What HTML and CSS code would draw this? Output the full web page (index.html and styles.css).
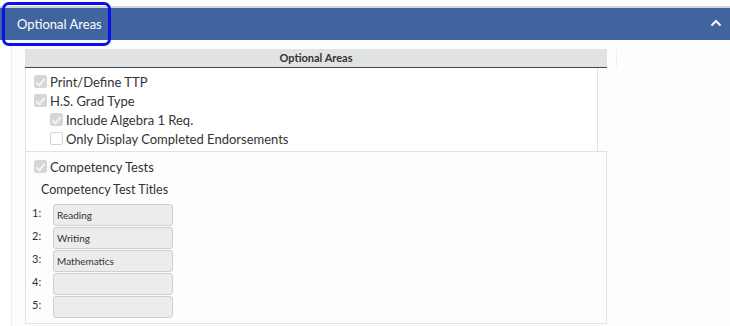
FILE: index.html
```html
<!DOCTYPE html>
<html lang="en">
<head>
    <meta charset="UTF-8">
    <title>Optional Areas</title>
    <link rel="stylesheet" href="styles.css">
</head>
<body>
    <div class="panel">
        <div class="panel-heading">
            <span class="panel-title">Optional Areas</span>
            <svg class="chevron" width="12" height="8" viewBox="0 0 12 8">
                <polyline points="1.5,6.5 6,2 10.5,6.5" fill="none" stroke="#fff" stroke-width="2"/>
            </svg>
        </div>
        <div class="panel-body">
            <div class="grid">
                <div class="grid-top">
                    <div class="grid-head">Optional Areas</div>
                    <div class="grid-gutter"></div>
                </div>
                <div class="section">
                    <label class="check"><span class="box checked"></span>Print/Define TTP</label>
                    <label class="check"><span class="box checked"></span>H.S. Grad Type</label>
                    <label class="check sub"><span class="box checked"></span>Include Algebra 1 Req.</label>
                    <label class="check sub"><span class="box"></span>Only Display Completed Endorsements</label>
                </div>
                <div class="section comp">
                    <label class="check"><span class="box checked"></span>Competency Tests</label>
                    <div class="titles-label">Competency Test Titles</div>
                    <div class="titles">
                        <div class="title-row"><span class="num">1:</span><span class="field">Reading</span></div>
                        <div class="title-row"><span class="num">2:</span><span class="field">Writing</span></div>
                        <div class="title-row"><span class="num">3:</span><span class="field">Mathematics</span></div>
                        <div class="title-row"><span class="num">4:</span><span class="field"></span></div>
                        <div class="title-row"><span class="num">5:</span><span class="field"></span></div>
                    </div>
                </div>
            </div>
        </div>
    </div>
</body>
</html>
```

FILE: styles.css
```css
body {
    margin: 0;
    font-family: Lato, "Open Sans", sans-serif;
    color: #333;
    background: #fff;
}

.panel {
    margin-top: 6px;
    border-top: 2px solid #d3d3d3;
}

.panel-heading {
    position: relative;
    display: flex;
    align-items: center;
    justify-content: space-between;
    height: 32px;
    background: #40649e;
    color: #fff;
    padding: 0 8px 0 17px;
}

.panel-title {
    font-size: 13px;
    position: relative;
}

.panel-title::after {
    content: "";
    position: absolute;
    left: -15px;
    top: -14px;
    width: 103px;
    height: 38px;
    border: 3px solid #0a10e8;
    border-radius: 7px;
}

.chevron {
    display: block;
    margin-top: -2px;
}

.panel-body {
    margin-left: 11px;
    border-left: 1px solid #ececec;
    padding: 9px 0 3px 13px;
    background: #fdfdfd;
}

.grid {
    width: 582px;
}

.grid-top {
    display: flex;
}

.grid-head {
    flex: none;
    width: 582px;
    height: 18px;
    line-height: 18px;
    background: #e1e2e2;
    border-bottom: 1px solid #3b4656;
    text-align: center;
    font-size: 11px;
    font-weight: bold;
    color: #333;
}

.grid-gutter {
    flex: none;
    margin-left: 9px;
    width: 1px;
    height: 18px;
    background: #f0f0f0;
}

.section {
    width: 563px;
    border-left: 1px solid #e2e2e2;
    border-right: 1px solid #e2e2e2;
    border-bottom: 1px solid #e2e2e2;
    padding: 4px 0 3px 8px;
    background: #fff;
}

.section.comp {
    width: 575px;
    padding: 5px 0 5px 5px;
    margin-top: -1px;
    border-top: 1px solid #e2e2e2;
    background: #fdfdfd;
}

.comp .check {
    margin-left: 3px;
}

.check {
    display: flex;
    align-items: center;
    height: 19px;
    font-size: 13px;
}

.check.sub {
    margin-left: 16px;
}

.box {
    width: 13px;
    height: 13px;
    box-sizing: border-box;
    border: 1px solid #d4d4d4;
    border-radius: 2px;
    background: #fff;
    margin-right: 3px;
    position: relative;
}

.box.checked {
    background: #d6d6d6;
    border-color: #d6d6d6;
}

.box.checked::after {
    content: "";
    position: absolute;
    left: 3px;
    top: 1px;
    width: 3px;
    height: 7px;
    border: solid #f4f4f4;
    border-width: 0 2px 2px 0;
    transform: rotate(40deg);
}

.titles-label {
    font-size: 12.5px;
    margin: 5px 0 0 10px;
    height: 18px;
    line-height: 18px;
}

.titles {
    margin-top: 4px;
}

.title-row {
    display: flex;
    align-items: center;
    height: 23px;
}

.num {
    width: 21px;
    font-size: 11px;
    margin-left: 1px;
    margin-top: -5px;
}

.field {
    box-sizing: border-box;
    width: 120px;
    height: 22px;
    line-height: 20px;
    border: 1px solid #cfcfcf;
    border-radius: 3px;
    background: #ececec;
    font-size: 10px;
    padding-left: 3px;
    color: #333;
}
```
